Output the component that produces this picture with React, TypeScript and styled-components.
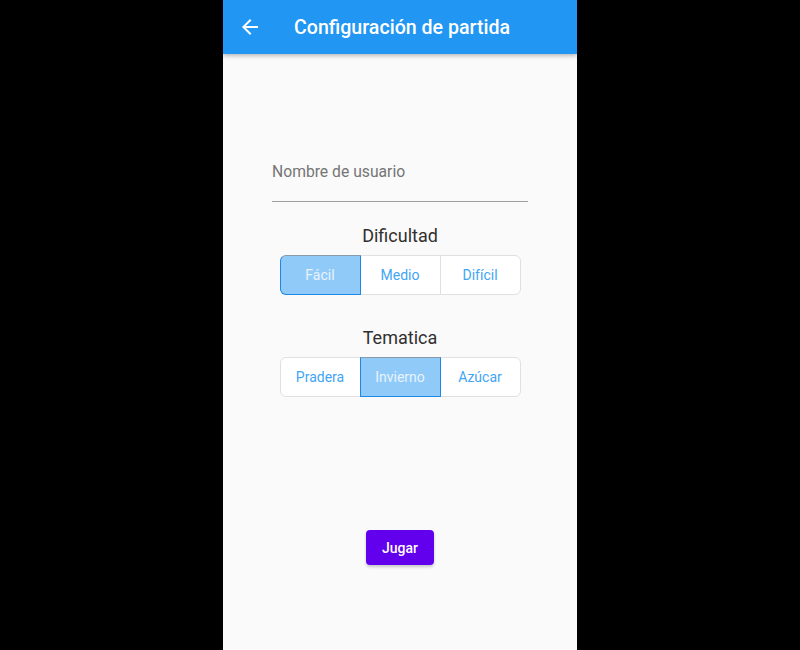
import React, { useState } from 'react';
import styled, { createGlobalStyle } from 'styled-components';

const GlobalStyle = createGlobalStyle`
  html, body {
    margin: 0;
    padding: 0;
    background: #000;
    font-family: Roboto, 'Liberation Sans', sans-serif;
  }
`;

const Screen = styled.div`
  width: 354px;
  height: 650px;
  margin: 0 auto;
  background: #fafafa;
  display: flex;
  flex-direction: column;
  overflow: hidden;
`;

const AppBar = styled.header`
  height: 54px;
  flex-shrink: 0;
  background: #2196f3;
  display: flex;
  align-items: center;
  padding-left: 15px;
  box-shadow: 0 2px 4px rgba(0, 0, 0, 0.25);
  position: relative;
  z-index: 1;
`;

const BackButton = styled.button`
  width: 24px;
  height: 24px;
  padding: 0;
  border: none;
  background: none;
  display: flex;
  cursor: pointer;
`;

const Title = styled.h1`
  margin: 0 0 0 32px;
  color: #fff;
  font-size: 19.6px;
  font-weight: 500;
`;

const Content = styled.main`
  display: flex;
  flex-direction: column;
  align-items: center;
  padding-top: 108px;
`;

const Field = styled.label`
  width: 256px;
  display: block;
  border-bottom: 1px solid #9e9e9e;
  padding-bottom: 19px;
`;

const Input = styled.input`
  width: 100%;
  border: none;
  outline: none;
  background: transparent;
  padding: 0;
  font-family: inherit;
  font-size: 15.7px;
  line-height: 20px;
  color: #333;

  ::placeholder {
    color: #6d6d6d;
  }
`;

const SectionTitle = styled.div<{ top: number }>`
  margin-top: ${(p) => p.top}px;
  font-size: 18px;
  line-height: 24px;
  color: #303030;
`;

const ToggleGroup = styled.div`
  margin-top: 7px;
  display: flex;
  padding-left: 1px;
`;

const Toggle = styled.button<{ selected?: boolean }>`
  position: relative;
  z-index: ${(p) => (p.selected ? 1 : 0)};
  width: 81px;
  height: 40px;
  margin-left: -1px;
  box-sizing: border-box;
  font-family: inherit;
  font-size: 14px;
  cursor: pointer;
  background: ${(p) => (p.selected ? '#90caf9' : '#fff')};
  color: ${(p) => (p.selected ? '#e8f3fd' : '#42a5f5')};
  border: 1px solid ${(p) => (p.selected ? '#1e88e5' : '#e0e0e0')};
  border-top-color: ${(p) => (p.selected ? '#8a9aa8' : '#e0e0e0')};
  border-radius: 0;

  &:first-child {
    border-radius: 6px 0 0 6px;
  }
  &:last-child {
    border-radius: 0 6px 6px 0;
  }
`;

const PlayButton = styled.button`
  margin-top: 133px;
  height: 35px;
  padding: 0 16px;
  border: none;
  border-radius: 4px;
  background: #6200ee;
  color: #fff;
  font-family: inherit;
  font-size: 14px;
  font-weight: 500;
  box-shadow: 0 2px 3px rgba(0, 0, 0, 0.2);
  cursor: pointer;
`;

function ArrowBack() {
  return (
    <svg width="24" height="24" viewBox="0 0 24 24" fill="#fff">
      <path d="M20 11H7.83l5.59-5.59L12 4l-8 8 8 8 1.41-1.41L7.83 13H20v-2z" />
    </svg>
  );
}

const dificultades = ['Fácil', 'Medio', 'Difícil'];
const tematicas = ['Pradera', 'Invierno', 'Azúcar'];

export default function App() {
  const [dificultad, setDificultad] = useState('Fácil');
  const [tematica, setTematica] = useState('Invierno');

  return (
    <>
      <GlobalStyle />
      <Screen>
        <AppBar>
          <BackButton aria-label="Volver">
            <ArrowBack />
          </BackButton>
          <Title>Configuración de partida</Title>
        </AppBar>
        <Content>
          <Field>
            <Input placeholder="Nombre de usuario" />
          </Field>

          <SectionTitle top={22}>Dificultad</SectionTitle>
          <ToggleGroup>
            {dificultades.map((d) => (
              <Toggle key={d} selected={d === dificultad} onClick={() => setDificultad(d)}>
                {d}
              </Toggle>
            ))}
          </ToggleGroup>

          <SectionTitle top={31}>Tematica</SectionTitle>
          <ToggleGroup>
            {tematicas.map((t) => (
              <Toggle key={t} selected={t === tematica} onClick={() => setTematica(t)}>
                {t}
              </Toggle>
            ))}
          </ToggleGroup>

          <PlayButton>Jugar</PlayButton>
        </Content>
      </Screen>
    </>
  );
}
